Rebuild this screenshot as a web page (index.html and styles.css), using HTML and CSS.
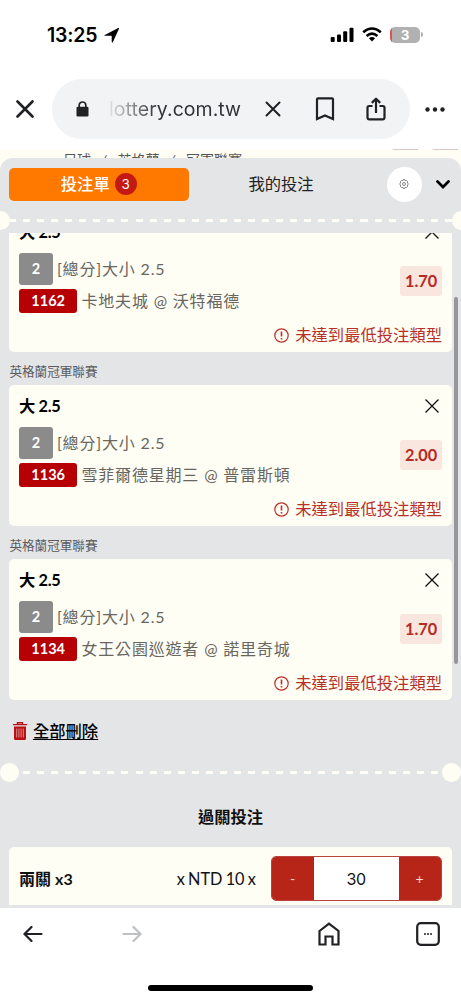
FILE: index.html
```html
<!DOCTYPE html>
<html lang="zh-Hant">
<head>
<meta charset="utf-8">
<title>投注單</title>
<link rel="stylesheet" href="styles.css">
</head>
<body>
<div class="phone">
  <header class="status">
    <span class="clock">13:25</span>
    <svg class="locate" width="16" height="16" viewBox="0 0 16 16"><path d="M.8 8 14.200.9q1.300-.5.8.9L8.900 14.900q-.8 1.200-1.200-.2V9.300q0-.5-.5-.5H1.500Q-.3 8.700.8 8z"/></svg>
    <svg class="signal" width="24" height="16" viewBox="0 0 24 16"><rect x=".7" y="10" width="4" height="5" rx="1"/><rect x="7" y="7.500" width="4" height="7.500" rx="1"/><rect x="13.200" y="4.300" width="4" height="10.700" rx="1"/><rect x="19.500" y=".8" width="4" height="14.200" rx="1"/></svg>
    <svg class="wifi" width="20" height="15" viewBox="0 0 20 15"><g fill="none" stroke="#000" stroke-width="2.600"><path d="M1.200 5.300Q10-2.300 18.800 5.300"/><path d="M4.600 9Q10 4.200 15.400 9"/></g><path d="M6.900 11.200Q10 8.800 13.100 11.200L10 14.400z"/></svg>
    <span class="battery"><b>3</b></span><span class="cap"></span>
  </header>
  <div class="address">
    <svg class="close" width="18" height="18" viewBox="0 0 18 18"><path d="M1.500 1.500l15 15m0-15l-15 15"/></svg>
    <div class="pill">
      <svg class="lock" width="13" height="16" viewBox="0 0 13 16"><path d="M3.200 6V4.300a3.200 3.200 0 0 1 6.600 0V6" fill="none" stroke="#222" stroke-width="1.700"/><rect x=".5" y="5.800" width="12" height="9.700" rx="1.300"/></svg>
      <span class="url">lottery.com.tw</span>
      <svg class="stop" width="16" height="16" viewBox="0 0 16 16"><path d="M1.500 1.500l13 13m0-13l-13 13"/></svg>
      <svg class="mark" width="20" height="24" viewBox="0 0 20 24"><path d="M2 2.200q0-.9.900-.9h14.200q.9 0 .9.900V22l-8-3.500L2 22z"/></svg>
      <svg class="share" width="20" height="24" viewBox="0 0 20 24"><path d="M6.500 9H3.200Q1.500 9 1.500 10.700v9.900q0 1.700 1.700 1.700h13.600q1.700 0 1.700-1.700v-9.900Q18.500 9 16.800 9h-3.300M10 16V2M5.800 5.900 10 1.700l4.200 4.200"/></svg>
    </div>
    <svg class="more" width="20" height="5" viewBox="0 0 20 5"><circle cx="2.500" cy="2.500" r="2.200"/><circle cx="10" cy="2.500" r="2.200"/><circle cx="17.500" cy="2.500" r="2.200"/></svg>
  </div>
  <div class="behind">
    <div class="crumbs"><span>足球</span><i>/</i><span>英格蘭</span><i>/</i><span>冠軍聯賽</span></div>
    <div class="strips"><i></i><i></i></div>
  </div>
  <main class="sheet">
    <nav class="tabs">
      <div class="tab active">投注單<span class="count">3</span></div>
      <div class="tab">我的投注</div>
      <div class="gear"><svg width="10" height="10" viewBox="0 0 10 10"><path d="M4 .7h2l.4 1.100 1.100-.4 1.300 1.500-.5 1 .9.600v1l-.9.600.5 1-1.300 1.500-1.100-.4L6 9.300H4l-.4-1.100-1.100.4-1.300-1.500.5-1-.9-.6v-1l.9-.6-.5-1 1.300-1.500 1.100.4z"/><circle cx="5" cy="5" r="1.500"/></svg></div>
      <svg class="chevron" width="14" height="9" viewBox="0 0 14 9"><path d="M1.500 1.500 7 7l5.500-5.500"/></svg>
    </nav>
    <div class="divider edge"><i></i><i></i></div>
    <section class="slip">
      <div class="thumb"></div>
      <article class="card first">
        <div class="title"><b>大 2.5</b><svg width="14" height="14" viewBox="0 0 14 14"><path d="M.5.500l13 13m0-13l-13 13"/></svg></div>
        <div class="bet">
          <div class="info">
            <div class="line"><span class="num">2</span><span class="market">[總分]大小 2.5</span></div>
            <div class="line"><span class="code">1162</span><span class="teams">卡地夫城 @ 沃特福德</span></div>
          </div>
          <span class="odds">1.70</span>
        </div>
        <div class="warn"><svg width="15" height="15" viewBox="0 0 15 15"><circle cx="7.500" cy="7.500" r="6.700"/><path class="bang" d="M7.500 3.500v5M7.500 10v1.600"/></svg>未達到最低投注類型</div>
      </article>
      <h3 class="league">英格蘭冠軍聯賽</h3>
      <article class="card">
        <div class="title"><b>大 2.5</b><svg width="14" height="14" viewBox="0 0 14 14"><path d="M.5.500l13 13m0-13l-13 13"/></svg></div>
        <div class="bet">
          <div class="info">
            <div class="line"><span class="num">2</span><span class="market">[總分]大小 2.5</span></div>
            <div class="line"><span class="code">1136</span><span class="teams">雪菲爾德星期三 @ 普雷斯頓</span></div>
          </div>
          <span class="odds">2.00</span>
        </div>
        <div class="warn"><svg width="15" height="15" viewBox="0 0 15 15"><circle cx="7.500" cy="7.500" r="6.700"/><path class="bang" d="M7.500 3.500v5M7.500 10v1.600"/></svg>未達到最低投注類型</div>
      </article>
      <h3 class="league">英格蘭冠軍聯賽</h3>
      <article class="card">
        <div class="title"><b>大 2.5</b><svg width="14" height="14" viewBox="0 0 14 14"><path d="M.5.500l13 13m0-13l-13 13"/></svg></div>
        <div class="bet">
          <div class="info">
            <div class="line"><span class="num">2</span><span class="market">[總分]大小 2.5</span></div>
            <div class="line"><span class="code">1134</span><span class="teams">女王公園巡遊者 @ 諾里奇城</span></div>
          </div>
          <span class="odds">1.70</span>
        </div>
        <div class="warn"><svg width="15" height="15" viewBox="0 0 15 15"><circle cx="7.500" cy="7.500" r="6.700"/><path class="bang" d="M7.500 3.500v5M7.500 10v1.600"/></svg>未達到最低投注類型</div>
      </article>
      <div class="clear"><svg width="14" height="18" viewBox="0 0 14 18"><path d="M0 2.600h14M4.500 2.400V.7h5v1.700" fill="none" stroke="#b80f12" stroke-width="1.400"/><path d="M1 4.500h12v12q0 1.500-1.500 1.500h-9Q1 18 1 16.500z" fill="#b80f12"/><path d="M3.700 6.500v9M5.900 6.500v9M8.100 6.500v9M10.300 6.500v9" stroke="#e8aaa9" stroke-width=".8"/></svg><u>全部刪除</u></div>
    </section>
    <div class="divider"><i></i><i></i></div>
    <h2 class="heading">過關投注</h2>
    <div class="stake">
      <b class="combo">兩關 x3</b>
      <span class="unit">x NTD 10 x</span>
      <div class="stepper"><span>-</span><strong>30</strong><span>+</span></div>
    </div>
  </main>
  <footer class="toolbar">
    <svg class="back" width="20" height="16" viewBox="0 0 20 16"><path d="M18.500 8H2M8.500 1 1.500 8l7 7"/></svg>
    <svg class="forward" width="20" height="16" viewBox="0 0 20 16"><path d="M1.500 8H18M11.500 1l7 7-7 7"/></svg>
    <svg class="home" width="22" height="24" viewBox="0 0 22 24"><path d="M1.500 9 11 1.700 20.500 9v13.500h-6v-8h-7v8h-6z"/></svg>
    <svg class="pages" width="24" height="24" viewBox="0 0 24 24"><rect x="1.200" y="1.200" width="21.600" height="21.600" rx="3.500"/><path d="M8 12h2m1 0h2m1 0h2"/></svg>
  </footer>
  <div class="homebar"></div>
</div>
</body>
</html>
```
FILE: styles.css
```css
* { box-sizing: border-box; }
body { margin: 0; background: #fff; }
svg { flex: none; display: block; }
i { font-style: normal; }
.phone {
  width: 461px; height: 1000px; overflow: hidden;
  display: flex; flex-direction: column;
  font-family: Lato, "Noto Sans CJK TC", sans-serif;
  font-size: 16px; color: #111;
}
.phone > * { flex: none; }

.status { height: 69px; padding: 0 38px 0 47px; display: flex; align-items: center; font-family: Inter, sans-serif; }
.clock { font-size: 19.500px; font-weight: 600; letter-spacing: -.2px; color: #000; width: 57px; line-height: 24px; }
.signal { margin-left: auto; }
.wifi { margin-left: 8px; }
.battery {
  width: 30px; height: 16px; margin-left: 8px; border-radius: 5px; overflow: hidden;
  background: linear-gradient(90deg, #df5154 1.500px, #b1b1b1 1.500px);
  color: #fff; font-size: 13.500px; line-height: 16px; text-align: center;
}
.cap { width: 2px; height: 5px; margin-left: 1px; border-radius: 0 2px 2px 0; background: #b1b1b1; }

.address { height: 80px; padding: 0 15px 0 16px; display: flex; align-items: center; }
.close, .stop { fill: none; stroke: #202124; stroke-width: 2.600; stroke-linecap: round; }
.stop { stroke-width: 2; margin-left: 23px; }
.pill { width: 358px; height: 60px; margin: 0 15px 0 18px; padding-left: 24px; border-radius: 30px; background: #f2f3f5; display: flex; align-items: center; }
.lock { fill: #222; }
.url {
  width: 133px; margin-left: 20px; line-height: 30px; white-space: nowrap;
  font-family: Inter, sans-serif; font-size: 19.500px; letter-spacing: .05px;
  background: linear-gradient(90deg, #e2e3e5 0, #a0a2a4 18px, #303134 48px);
  -webkit-background-clip: text; background-clip: text; color: transparent;
}
.mark, .share { fill: none; stroke: #202124; stroke-width: 2.200; }
.mark { margin-left: 34px; }
.share { margin-left: 31px; stroke-linejoin: round; }
.more { fill: #202124; }

.behind { height: 21px; margin-bottom: -12px; overflow: hidden; background: #fffdf4; display: flex; justify-content: space-between; }
.crumbs { padding: 1px 0 0 63px; display: flex; font-size: 14px; line-height: 20px; color: #555; }
.crumbs i { width: 26.500px; text-align: center; }
.strips { display: flex; gap: 15px; padding-right: 3px; }
.strips i { width: 25px; height: 1px; background: #d9c9c1; }

.sheet { height: 750px; overflow: hidden; background: #e4e5e7; border-radius: 13px 13px 0 0; position: relative; display: flex; flex-direction: column; }
.sheet > * { flex: none; }
.tabs { height: 52px; padding: 0 11px 0 9px; display: flex; align-items: center; }
.tab { width: 179.500px; height: 33px; display: flex; align-items: center; justify-content: center; font-size: 16.300px; line-height: 31px; padding-bottom: 1px; color: #222; }
.tab + .tab { width: 185px; }
.active { background: #ff7800; color: #fff; border-radius: 5px; font-weight: 500; }
.count { width: 22px; height: 22px; margin-left: 5px; border-radius: 50%; background: #c41a13; font: 13.500px/22px Inter, sans-serif; text-align: center; }
.gear { width: 35px; height: 35px; margin-left: 13px; border-radius: 50%; background: #fff; display: flex; align-items: center; justify-content: center; }
.gear svg { fill: none; stroke: #555; stroke-width: .7; }
.chevron { margin-left: auto; fill: none; stroke: #000; stroke-width: 2.700; stroke-linecap: round; }

.divider {
  height: 20px; display: flex; justify-content: space-between; align-items: center;
  background: repeating-linear-gradient(90deg, #fffef6 0 7px, transparent 7px 14.060px) 8.700px 9px / 100% 3px no-repeat;
}
.divider i { width: 19px; height: 19px; border-radius: 50%; background: #fffef5; }
.edge { margin: 0 -9.500px; background-position-x: 18.200px; }

.slip { height: 529px; overflow: hidden; padding: 0 9.400px; position: relative; margin-top: 3px; }
.thumb { position: absolute; right: 3px; top: 64px; width: 4px; height: 367px; border-radius: 2px; background: #96969b; }
.card { height: 141px; padding: 10px 9.500px 0; border-radius: 5px; background: #fffef5; }
.first { margin-top: -22px; }
.title { height: 22px; padding-right: 3px; display: flex; align-items: center; justify-content: space-between; font-size: 16.300px; letter-spacing: -.3px; line-height: 22px; color: #000; }
.title svg { fill: none; stroke: #111; stroke-width: 1.300; }
.bet { height: 62px; margin-top: 10px; display: flex; justify-content: space-between; }
.info { display: flex; flex-direction: column; gap: 4px; }
.line { display: flex; align-items: center; color: #68665f; font-size: 16px; letter-spacing: .83px; white-space: nowrap; line-height: 24px; }
.num, .code { color: #fff; font-weight: 700; font-size: 14.500px; letter-spacing: 0; text-align: center; border-radius: 3px; }
.num { width: 34px; height: 32px; line-height: 32px; background: #8b8b8b; }
.code { width: 58.500px; height: 24px; line-height: 24px; background: #b60003; }
.market { margin-left: 4px; }
.teams { margin-left: 4px; }
.odds { width: 42px; height: 30px; margin-top: 13px; border-radius: 3px; background: #f8e6df; color: #b42b23; font-weight: 700; font-size: 16.300px; line-height: 30px; text-align: center; }
.warn { height: 22px; margin-top: 9px; display: flex; align-items: center; justify-content: flex-end; gap: 6px; font-size: 16.330px; line-height: 22px; color: #b8302a; }
.warn svg { fill: none; stroke: #b8302a; stroke-width: 1.200; }
.warn .bang { stroke-width: 1.600; }
.league { height: 33px; margin: 0; padding-top: 9px; font-size: 12.600px; line-height: 22px; font-weight: 400; color: #5a5b5e; }
.clear { padding: 19px 0 0 4px; display: flex; align-items: center; gap: 5.500px; font-size: 16.330px; line-height: 24px; font-weight: 500; color: #000; }
.clear u { text-underline-offset: 2px; }

.heading { margin: 23px 0 0; font-size: 16.300px; line-height: 24px; text-align: center; color: #111; }
.stake { height: 57.500px; margin: 18px 9.400px 0; padding: 9px 10px 0 9.500px; border-radius: 5px 5px 0 0; background: #fffef5; display: flex; line-height: 46px; }
.combo { width: 158px; letter-spacing: .1px; }
.unit { width: 94px; font-size: 16.300px; line-height: 45px; word-spacing: -1px; }
.stepper { width: 171px; height: 45px; border: 1.500px solid #b9443d; border-radius: 5px; overflow: hidden; display: flex; background: #fff; }
.stepper span { width: 42px; background: #b72519; color: #ffd9d3; text-align: center; font-size: 14px; line-height: 43px; }
.stepper strong { flex: 1; text-align: center; font: 16px/45px Inter, sans-serif; letter-spacing: -.3px; }

.toolbar { height: 53px; padding: 0 21px 1px 22.500px; display: flex; align-items: center; background: #fff; }
.toolbar svg { fill: none; stroke: #202124; stroke-width: 2.200; stroke-linecap: round; }
.toolbar .forward { margin-left: 79px; stroke: #bfc0c3; }
.toolbar .home { margin-left: auto; stroke-linecap: butt; }
.toolbar .pages { margin-left: 76px; }
.toolbar .pages path { stroke-width: 1.700; stroke-linecap: butt; }
.homebar { width: 165px; height: 6px; margin: 24px auto 0; border-radius: 3px; background: #000; }
```
